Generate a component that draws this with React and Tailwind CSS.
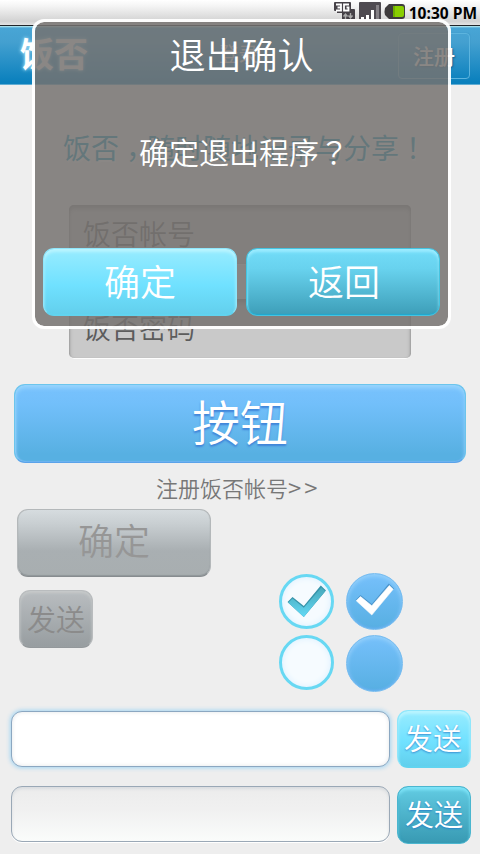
import React from "react";

const LIGHT =
  "flex items-center justify-center rounded-[11px] border border-[#8fe6fb] border-b-[#62d3ef] bg-[linear-gradient(#98ecff_0%,#70e1ff_55%,#62cfec_100%)] shadow-[inset_0_3px_3px_#b9f4ff,inset_0_-1px_1px_#60d4f0] text-white";

function StatusBar() {
  return (
    <div className="flex h-[25px] items-start justify-end bg-[linear-gradient(#ffffff_0%,#f4f4f4_25%,#d2d2d2_85%,#e4e4e4_100%)] pr-[3px]">
      <svg width="22" height="18" viewBox="0 0 22 18" className="mt-[2px]">
        <path d="M1 0h15q1 0 1 1v6h3q1 0 1 1v9H8v-6H3v-2H1q-1 0-1-1V1q0-1 1-1z" fill="#454147" />
        <path d="M2 2.500h5v6H2M3.500 5.500h3.500M15 2.500H10v6h4.500V5.500h-2" fill="none" stroke="#fff" strokeWidth="1.8" />
        <path d="M11.500 17v-5m-2 2.500 2-2.500 2 2.500M16.500 11v5m-2-2.500 2 2.500 2-2.500" fill="none" stroke="#aaa" strokeWidth="1.4" />
      </svg>
      <svg width="23" height="18" viewBox="0 0 23 18" className="ml-[3px] mt-[2px]">
        <path d="M1 0h20q1 0 1 1v17H0V1q0-1 1-1z" fill="#4f4b51" />
        <path d="M2 15h3v3H2zM7 13h3v5H7zM12 8h3v10h-3z" fill="#fff" />
        <path d="M17 3h3v15h-3z" fill="#858186" />
      </svg>
      <svg width="22" height="17" viewBox="0 0 22 17" className="ml-[2px] mt-[4px]">
        <path d="M5 0h13q3 0 3 3v9q0 3-3 3H5L1 11Q0 7.500 1 4z" fill="#3e3b3d" />
        <path d="M9 2h9q2 0 2 2v7q0 2-2 2H9z" fill="#89ce00" />
        <path d="M9 2h2v11H9z" fill="#6fae00" />
      </svg>
      <span className="ml-[3px] mt-[3px] whitespace-nowrap font-['Open_Sans','Noto_Sans',sans-serif] text-[15.500px] font-bold leading-[20px] text-black">
        10:30 PM
      </span>
    </div>
  );
}

function Header() {
  return (
    <header className="flex h-[60px] items-center justify-between border-t border-[#20252a] bg-[linear-gradient(#c5f1f3_0px,#48a5d5_2px,#44a0d0_16px,#0a80bd_56px,#0a80bd_58px,#b8d9e8_59px)] pl-[20px] pr-[10px] text-white">
      <h1 className="w-[72px] pb-[5px] text-[34px] font-bold leading-[40px] [text-shadow:0_0_4px_#8ed3f2,0_0_3px_#8ed3f2]">饭否</h1>
      <span className="pb-[4px] pr-[13px] text-[20px] leading-[24px]">登录</span>
      <button className="h-[46px] w-[72px] rounded-[4px] border border-[#5cb4de] pb-[2px] text-[21px] font-medium leading-[40px] shadow-[0_0_1px_#2b84b5] [text-shadow:1px_1px_2px_#17618c]">
        注册
      </button>
    </header>
  );
}

function Field({ label }) {
  return (
    <div className="h-[60px] w-[342px] rounded-[5px] border-b border-[#fdfdfd] bg-[#c9c9c9] pl-[14px] text-[28px] font-[350] leading-[57px] text-[#5c5c5c] shadow-[inset_0_4px_5px_-1px_#8a8a8a,inset_2px_0_2px_-1px_#aaa,inset_-2px_0_2px_-1px_#aaa]">
      {label}
    </div>
  );
}

function Radio({ solid, checked }) {
  const cls = solid
    ? "size-[57px] border border-[#78bdf0] bg-[linear-gradient(#76c0fb,#57afe2)] shadow-[inset_0_2px_4px_#98d2fb,inset_0_-1px_2px_#5faaf0]"
    : "size-[55px] border-[3px] border-[#67d8f3] bg-[#f6fbff] shadow-[inset_0_0_6px_#d9efff]";
  return (
    <div className={`flex shrink-0 items-center justify-center rounded-full ${cls}`}>
      {checked && (
        <svg width="40" height="34" viewBox="0 0 40 34" className={solid ? "mb-[4px] shrink-0" : "ml-[1px] shrink-0"}>
          <defs>
            <linearGradient id="tick" x1="0" y1="0" x2="0" y2="1">
              <stop offset="0" stopColor="#46a9bc" />
              <stop offset="0.5" stopColor="#55bfd6" />
              <stop offset="1" stopColor="#64daf6" />
            </linearGradient>
          </defs>
          <path d="M0.500 17 5.500 12 16.800 21 33.800 0.500 39 5.500 16.800 32z" fill={solid ? "#4d96cd" : "#3794aa"} />
          <path d="M1.200 17.700 5.500 13.600 16.800 22.800 34.300 2.500 38.200 6.300 16.800 32z" fill={solid ? "#fff" : "url(#tick)"} stroke={solid ? "#fff" : "none"} strokeWidth="0.600" />
        </svg>
      )}
    </div>
  );
}

function Dialog() {
  return (
    <div className="absolute left-[32px] top-[19px] flex h-[310px] w-[419px] flex-col rounded-[12px] border-[3px] border-white/95 bg-[rgba(118,114,112,0.85)] bg-clip-padding text-white">
      <h2 className="h-[66px] text-center text-[36px] font-[350] leading-[63px]">退出确认</h2>
      <p className="ml-[104px] mt-[42px] h-[44px] whitespace-nowrap text-[30px] font-[350] leading-[42px]">
        确定退出程序<span className="font-['Noto_Sans_CJK_TC',sans-serif]">？</span>
      </p>
      <div className="mt-[74px] flex gap-[9px] pl-[8px]">
        <button className={`${LIGHT} h-[68px] w-[194px] pb-[4px] text-[36px] font-[350]`}>确定</button>
        <button className="flex h-[68px] w-[194px] items-center justify-center rounded-[11px] border border-[#45c4e1] bg-[linear-gradient(#72dcf9_0%,#68d2ee_30%,#3d9eb8_100%)] pb-[4px] pl-[2px] text-[36px] font-[350] shadow-[inset_0_3px_3px_#9cecff,inset_0_-1px_1px_#20a9d0,inset_1px_0_1px_#55cce8]">
          返回
        </button>
      </div>
    </div>
  );
}

export default function App() {
  return (
    <div className="relative flex h-[854px] w-[480px] flex-col overflow-hidden bg-[#eee] font-['Noto_Sans_CJK_SC',sans-serif]">
      <StatusBar />
      <Header />
      <p className="ml-[63px] mt-[42px] h-[41px] whitespace-nowrap text-[28px] font-normal leading-[40px] text-[#0092b8] [text-shadow:1px_2px_2px_#fff]">
        饭否<span className="relative left-[7px]">，</span>随时随地记录与分享<span className="font-['Noto_Sans_CJK_TC',sans-serif]">！</span>
      </p>
      <div className="ml-[69px] mt-[37px] flex flex-col gap-[34px]">
        <Field label="饭否帐号" />
        <Field label="饭否密码" />
      </div>
      <button className="ml-[14px] mt-[25px] flex h-[79px] w-[452px] items-center justify-center rounded-[11px] border border-[#6cc5ec] border-b-[#5aa3ea] bg-[linear-gradient(#78c2fd_0%,#72bffa_25%,#57b0e2_90%)] pb-[8px] text-[48px] font-[350] leading-[70px] text-white shadow-[inset_0_3px_4px_#98d5fd,inset_1px_0_2px_#8bccf8,inset_0_-1px_1px_#62a8ef] [text-shadow:0_2px_2px_#3f83d8]">
        按钮
      </button>
      <a className="ml-[156px] mt-[9px] h-[30px] whitespace-nowrap text-[22px] font-[350] leading-[30px] text-[#777]">
        注册饭否帐号<span className="text-[24px] tracking-[3px]">&gt;&gt;</span>
      </a>
      <div className="mt-[7px] flex h-[183px] pl-[17px]">
        <div className="flex w-[262px] flex-col items-start">
          <button className="flex h-[68px] w-[194px] items-center justify-center rounded-[11px] border border-[#b4b8ba] border-b-[#878c8f] bg-[linear-gradient(#d6dcdf_0%,#c9cfd2_20%,#a9afb2_62%,#a8aeb0_100%)] pb-[8px] text-[36px] font-[350] text-[#969696] shadow-[inset_0_-1px_1px_#8f9699]">
            确定
          </button>
          <button className="ml-[2px] mt-[13px] flex h-[58px] w-[74px] items-center justify-center rounded-[11px] border border-[#b9bcbe] border-b-[#93989b] bg-[linear-gradient(#b9bdc0,#979da0)] text-[29px] font-[350] text-[#8b8b8b] shadow-[inset_0_2px_3px_#c7caca]">
            发送
          </button>
        </div>
        <div className="mt-[64px] flex gap-[12px]">
          <div className="flex flex-col gap-[6px] pt-[1px]">
            <Radio checked />
            <Radio />
          </div>
          <div className="flex flex-col gap-[5px]">
            <Radio solid checked />
            <Radio solid />
          </div>
        </div>
      </div>
      <div className="mt-[18px] flex h-[58px] items-center gap-[7px] pl-[11px]">
        <div className="h-[56px] w-[379px] rounded-[11px] border border-[#8ba7c1] bg-white shadow-[0_0_4px_1px_#a4d5f2,inset_0_0_4px_#e2e5e8]" />
        <button className={`${LIGHT} h-[58px] w-[74px] pb-[3px] pr-[2px] text-[29px] font-[350] [text-shadow:0_1px_2px_#398cd0]`}>发送</button>
      </div>
      <div className="mt-[18px] flex h-[58px] items-start gap-[7px] pl-[11px]">
        <div className="h-[56px] w-[379px] rounded-[11px] border border-[#9aa8b6] bg-[linear-gradient(#ececec_0%,#f0f0f0_40%,#fafcfb_100%)] shadow-[0_1px_0_#fff,inset_0_2px_3px_#d9dcdf]" />
        <button className="flex h-[58px] w-[74px] items-center justify-center rounded-[11px] border border-[#4bb6cf] bg-[linear-gradient(#63cce3_0%,#55bcd4_30%,#389ab3_100%)] pb-[3px] text-[29px] font-[350] text-white shadow-[inset_0_3px_3px_#7ee4f8,inset_1px_0_2px_#329bb8] [text-shadow:0_1px_2px_#2780c8]">
          发送
        </button>
      </div>
      <Dialog />
    </div>
  );
}
